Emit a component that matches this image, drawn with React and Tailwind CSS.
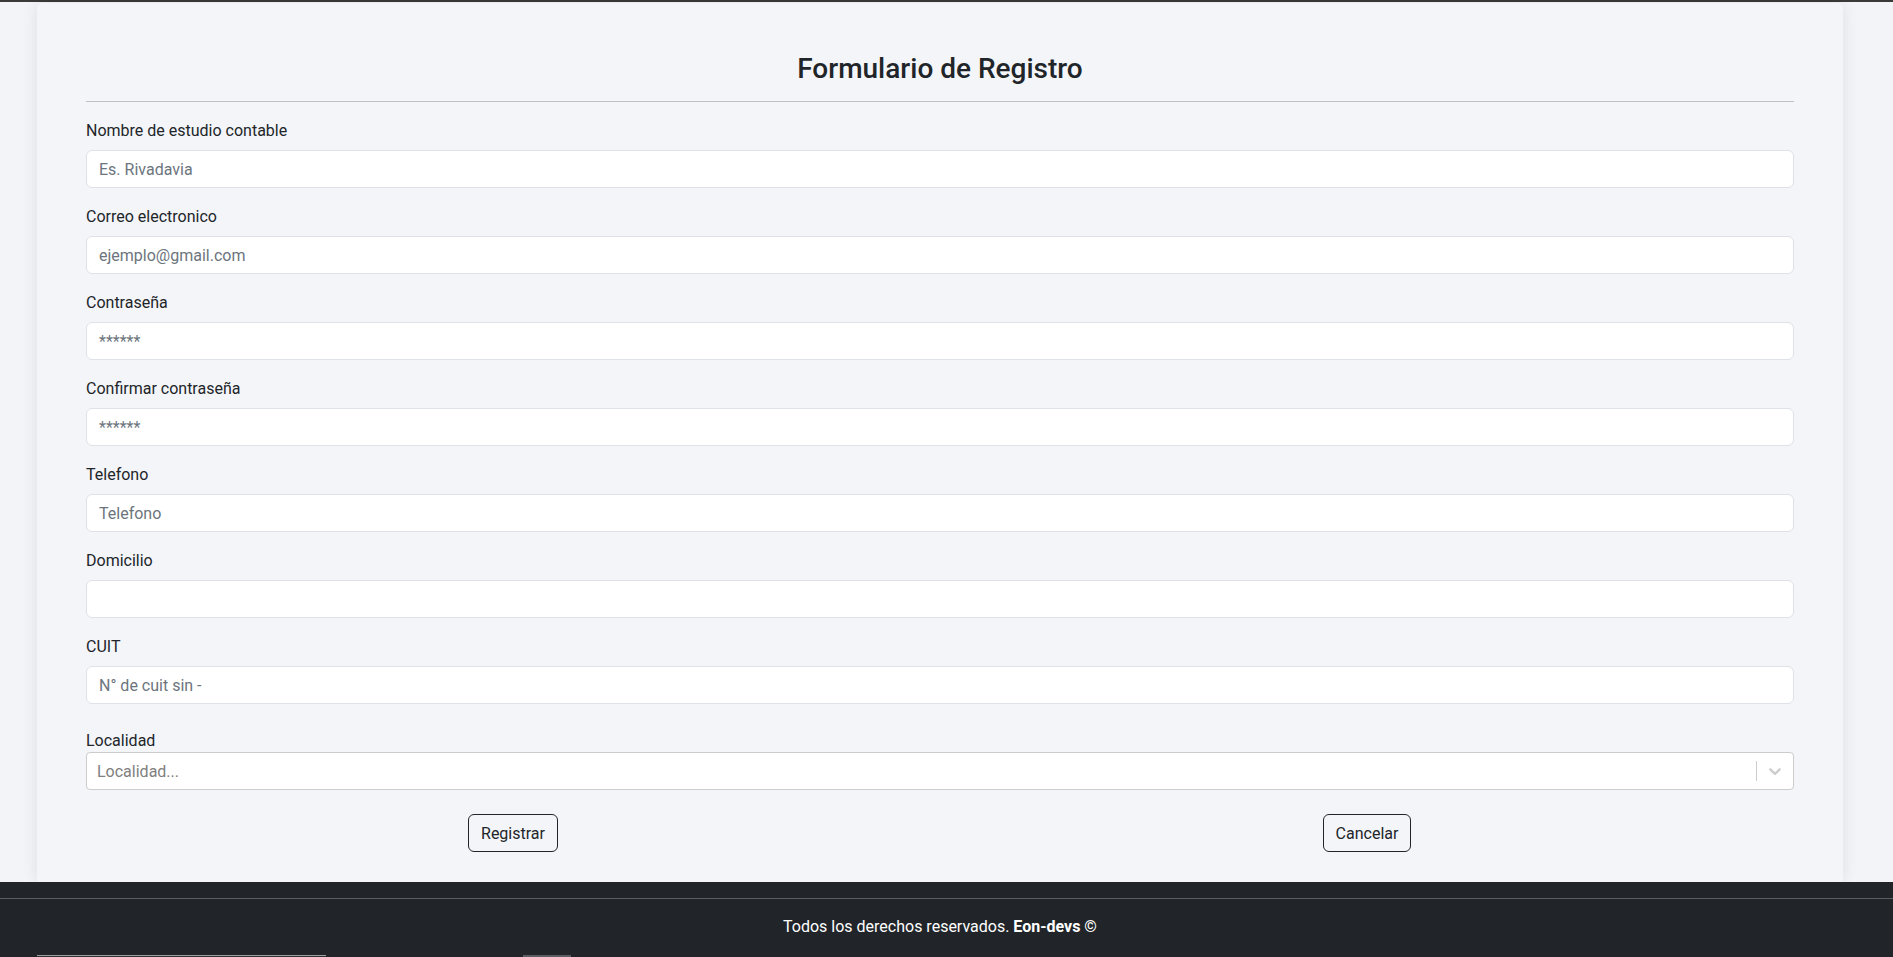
import React from "react";

const campos = [
    { label: "Nombre de estudio contable", placeholder: "Es. Rivadavia", type: "text" },
    { label: "Correo electronico", placeholder: "ejemplo@gmail.com", type: "email" },
    { label: "Contraseña", placeholder: "******", type: "password" },
    { label: "Confirmar contraseña", placeholder: "******", type: "password" },
    { label: "Telefono", placeholder: "Telefono", type: "text" },
    { label: "Domicilio", placeholder: "", type: "text" },
    { label: "CUIT", placeholder: "N° de cuit sin -", type: "text" },
];

function Campo({ label, placeholder }) {
    return (
        <div className="mb-4">
            <label className="block mb-2 pt-[1px] h-6 text-[16px] leading-6 text-[#212529]">{label}</label>
            <input
                type="text"
                placeholder={placeholder}
                className="block w-full h-[38px] px-3 pt-[1px] bg-white border border-[#dee2e6] rounded-[6px] text-[16px] text-[#212529] placeholder:text-[#6c757d] outline-none"
            />
        </div>
    );
}

export default function App() {
    return (
        <div
            className="h-[957px] overflow-hidden flex flex-col bg-[#f3f4f8] text-[#212529]"
            style={{ fontFamily: '"Segoe UI", Roboto, "Noto Sans", sans-serif' }}
        >
            <div className="h-[2px] shrink-0 bg-[#3a3a3a]" />

            <div className="flex-1 pt-[1px] pl-[37px]">
                <div className="w-[1806px] h-full bg-[#f4f5f9] rounded-t-[6px] shadow-[0_0_16px_rgba(0,0,0,0.09)] px-[49px] pt-12">
                    <h3 className="text-[28px] leading-[1.2] pt-[1px] h-[34px] font-medium text-center">Formulario de Registro</h3>
                    <hr className="mt-4 mb-4 border-0 border-t border-[#bfc0c3]" />

                    <form>
                        {campos.map((c) => (
                            <Campo key={c.label} {...c} />
                        ))}

                        <div className="mt-6">
                            <label className="block h-6 pt-[1px] text-[16px] leading-6">Localidad</label>
                            <div className="flex items-center h-[38px] bg-white border border-[#cccccc] rounded-[4px]">
                                <div className="flex-1 px-[10px] pt-[1px] text-[16px] text-[#808080]">Localidad...</div>
                                <span className="w-px h-[20px] bg-[#cccccc]" />
                                <div className="px-2 text-[#cccccc]">
                                    <svg width="20" height="20" viewBox="0 0 20 20" fill="currentColor">
                                        <path d="M4.516 7.548c0.436-0.446 1.043-0.481 1.576 0l3.908 3.747 3.908-3.747c0.533-0.481 1.141-0.446 1.574 0 0.436 0.445 0.408 1.197 0 1.615-0.406 0.418-4.695 4.502-4.695 4.502-0.217 0.223-0.502 0.335-0.787 0.335s-0.57-0.112-0.789-0.335c0 0-4.287-4.084-4.695-4.502s-0.436-1.17 0-1.615z" />
                                    </svg>
                                </div>
                            </div>
                        </div>

                        <div className="grid grid-cols-2 mt-6">
                            <div className="flex justify-center">
                                <button type="button" className="h-[38px] px-3 pt-[1px] border border-[#212529] rounded-[6px] text-[16px]">
                                    Registrar
                                </button>
                            </div>
                            <div className="flex justify-center">
                                <button type="button" className="h-[38px] px-3 pt-[1px] border border-[#212529] rounded-[6px] text-[16px]">
                                    Cancelar
                                </button>
                            </div>
                        </div>
                    </form>
                </div>
            </div>

            <footer className="h-[75px] shrink-0 bg-[#212529] pt-4">
                <div className="border-t border-[#5a5e63]">
                    <p className="w-[1806px] ml-[37px] py-4 text-center text-white text-[16px] leading-6">
                        Todos los derechos reservados. <b>Eon-devs ©</b>
                    </p>
                </div>
                {/* bordes de lo que sigue debajo del pie */}
                <div className="flex gap-[197px] pl-[37px]">
                    <div className="w-[289px] h-8 border-t border-[#a0a0a0] bg-[#2e3237]" />
                    <div className="w-[48px] h-8 bg-[#5a5d61]" />
                </div>
            </footer>
        </div>
    );
}
